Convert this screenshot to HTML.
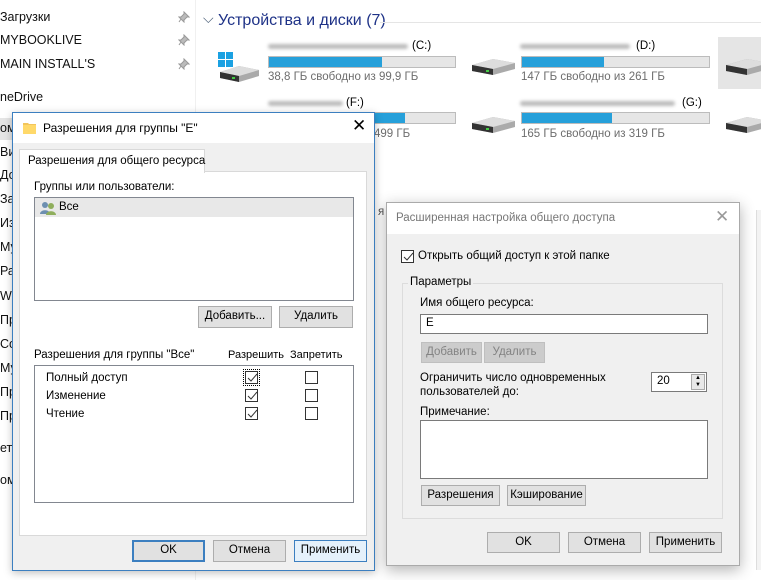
<!DOCTYPE html>
<html><head><meta charset="utf-8"><style>
*{box-sizing:border-box}
body{margin:0;width:761px;height:580px;overflow:hidden;background:#fff;font-family:"Liberation Sans","DejaVu Sans",sans-serif;font-size:11.5px;color:#000;position:relative}
.a{position:absolute;white-space:nowrap}
.btn{position:absolute;background:#e1e1e1;border:1px solid #adadad;text-align:center;line-height:19px;font-size:11.5px}
.cb{position:absolute;width:13px;height:13px;border:1px solid #333;background:#fff}
.cb svg{position:absolute;left:0;top:0}
.bar{position:absolute;height:12px;background:#e6e6e6;border:1px solid #bcbcbc}
.bar i{display:block;height:100%;background:#26a0da}
.blur{position:absolute;height:5px;background:#bbb;border-radius:3px;filter:blur(1.5px)}
.nav{position:absolute;left:0;font-size:12.5px;color:#111}
</style></head><body>
<div class="nav" style="top:10px">Загрузки</div>
<div class="nav" style="top:33px">MYBOOKLIVE</div>
<div class="nav" style="top:57px">MAIN INSTALL'S</div>
<div class="nav" style="top:90px">neDrive</div>
<svg class="a" style="left:178px;top:11px" width="12" height="12"><path d="M6 1l5 5-2 0-3 3 0 2-5-5 2 0 3-3z M3 8l-2 3" stroke="#999" fill="#bbb"/></svg>
<svg class="a" style="left:178px;top:34px" width="12" height="12"><path d="M6 1l5 5-2 0-3 3 0 2-5-5 2 0 3-3z M3 8l-2 3" stroke="#999" fill="#bbb"/></svg>
<svg class="a" style="left:178px;top:58px" width="12" height="12"><path d="M6 1l5 5-2 0-3 3 0 2-5-5 2 0 3-3z M3 8l-2 3" stroke="#999" fill="#bbb"/></svg>
<div class="a" style="left:0;top:118px;width:14px;height:22px;background:#e5e5e5"></div>
<div class="nav" style="top:121px">ом</div><div class="nav" style="top:145px">Ви</div><div class="nav" style="top:168px">До</div><div class="nav" style="top:192px">За</div><div class="nav" style="top:216px">Из</div><div class="nav" style="top:240px">Му</div><div class="nav" style="top:264px">Ра</div><div class="nav" style="top:289px">W</div><div class="nav" style="top:313px">Пр</div><div class="nav" style="top:337px">Со</div><div class="nav" style="top:361px">Му</div><div class="nav" style="top:385px">Пр</div><div class="nav" style="top:409px">Пр</div><div class="nav" style="top:441px">ет</div><div class="nav" style="top:473px">ом</div>
<div class="a" style="left:195px;top:0;width:1px;height:580px;background:#f0f0f0"></div>
<div class="a" style="left:203px;top:10px;color:#4c607a;font-size:14px">⌵</div>
<div class="a" style="left:218px;top:12px;font-size:16px;color:#1e3287">Устройства и диски (7)</div>
<div class="a" style="left:380px;top:22px;width:381px;height:1px;background:#e5e5e5"></div>
<svg class="a" style="left:217px;top:50px" width="45" height="32"><rect x="1" y="2" width="7" height="7" fill="#1ba1e2"/><rect x="9" y="2" width="7" height="7" fill="#1ba1e2"/><rect x="1" y="10" width="7" height="7" fill="#1ba1e2"/><rect x="9" y="10" width="7" height="7" fill="#1ba1e2"/><path d="M3 22 L22 16 L42 20 L42 26 L22 32 L3 28Z" fill="#aaa"/><path d="M3 22 L22 16 L42 20 L22 26Z" fill="#ddd"/><path d="M3 22 L22 26 L22 32 L3 28Z" fill="#333"/><rect x="15" y="27" width="3" height="2" fill="#4c4"/></svg>
<div class="blur" style="left:268px;top:44px;width:140px"></div><div class="a" style="left:412px;top:40px">(C:)</div>
<div class="bar" style="left:268px;top:56px;width:188px"><i style="width:61%"></i></div>
<div class="a" style="left:268px;top:71px;color:#6d6d6d">38,8 ГБ свободно из 99,9 ГБ</div>
<svg class="a" style="left:471px;top:59px" width="45" height="20"><path d="M1 6 L22 0 L44 4 L44 10 L22 16 L1 12Z" fill="#aaa"/><path d="M1 6 L22 0 L44 4 L22 10Z" fill="#ddd"/><path d="M1 6 L22 10 L22 16 L1 12Z" fill="#333"/><rect x="15" y="11" width="3" height="2" fill="#4c4"/></svg>
<div class="blur" style="left:520px;top:44px;width:110px"></div><div class="a" style="left:636px;top:40px">(D:)</div>
<div class="bar" style="left:521px;top:56px;width:189px"><i style="width:44%"></i></div>
<div class="a" style="left:521px;top:71px;color:#6d6d6d">147 ГБ свободно из 261 ГБ</div>
<div class="a" style="left:718px;top:37px;width:43px;height:52px;background:#e5e5e5"></div>
<svg class="a" style="left:725px;top:59px" width="40" height="20"><path d="M1 6 L22 0 L44 4 L44 10 L22 16 L1 12Z" fill="#aaa"/><path d="M1 6 L22 0 L44 4 L22 10Z" fill="#ddd"/><path d="M1 6 L22 10 L22 16 L1 12Z" fill="#333"/></svg>
<div class="blur" style="left:268px;top:101px;width:75px"></div><div class="a" style="left:346px;top:97px">(F:)</div>
<div class="bar" style="left:268px;top:112px;width:188px"><i style="width:73%"></i></div>
<div class="a" style="left:374px;top:128px;color:#6d6d6d">499 ГБ</div>
<svg class="a" style="left:471px;top:117px" width="45" height="20"><path d="M1 6 L22 0 L44 4 L44 10 L22 16 L1 12Z" fill="#aaa"/><path d="M1 6 L22 0 L44 4 L22 10Z" fill="#ddd"/><path d="M1 6 L22 10 L22 16 L1 12Z" fill="#333"/><rect x="15" y="11" width="3" height="2" fill="#4c4"/></svg>
<div class="blur" style="left:520px;top:101px;width:155px"></div><div class="a" style="left:682px;top:97px">(G:)</div>
<div class="bar" style="left:521px;top:112px;width:189px"><i style="width:48%"></i></div>
<div class="a" style="left:521px;top:128px;color:#6d6d6d">165 ГБ свободно из 319 ГБ</div>
<svg class="a" style="left:725px;top:117px" width="40" height="20"><path d="M1 6 L22 0 L44 4 L44 10 L22 16 L1 12Z" fill="#aaa"/><path d="M1 6 L22 0 L44 4 L22 10Z" fill="#ddd"/><path d="M1 6 L22 10 L22 16 L1 12Z" fill="#333"/></svg>
<div class="a" style="left:378px;top:206px;color:#555">я</div>

<div class="a" style="left:12px;top:112px;width:363px;height:459px;background:#f0f0f0;border:1px solid #3c7fc0;box-shadow:0 2px 8px rgba(0,0,0,.25)">
 <div class="a" style="left:0;top:0;width:361px;height:30px;background:#fff"></div>
 <svg class="a" style="left:10px;top:9px" width="14" height="12"><path d="M0 1h5l1 1h7v10H0z" fill="#f2c55c"/><path d="M0 3h13v9H0z" fill="#ffd96a"/></svg>
 <div class="a" style="left:30px;top:8px;font-size:12px">Разрешения для группы "E"</div>
 <div class="a" style="left:339px;top:3px;font-size:17px;font-weight:300">✕</div>
 <div class="a" style="left:6px;top:58px;width:348px;height:365px;background:#fff;border:1px solid #d9d9d9"></div>
 <div class="a" style="left:6px;top:36px;width:186px;height:24px;background:#fff;border:1px solid #d9d9d9;border-bottom:none;padding:5px 0 0 8px">Разрешения для общего ресурса</div>
 <div class="a" style="left:21px;top:68px">Группы или пользователи:</div>
 <div class="a" style="left:21px;top:84px;width:320px;height:104px;background:#fff;border:1px solid #828790"><div style="position:absolute;left:0;top:0;width:318px;height:19px;background:#e8e8e8"></div>
  <svg class="a" style="left:5px;top:3px" width="16" height="14"><circle cx="5" cy="4" r="3" fill="#6d8fb0"/><path d="M0 13c0-5 10-5 10 0z" fill="#6d8fb0"/><circle cx="11" cy="5" r="3" fill="#8fae5c"/><path d="M6 14c0-5 10-5 10 0z" fill="#8fae5c"/></svg>
  <div class="a" style="left:24px;top:3px">Все</div></div>
 <div class="btn" style="left:185px;top:193px;width:74px;height:22px">Добавить...</div>
 <div class="btn" style="left:266px;top:193px;width:74px;height:22px">Удалить</div>
 <div class="a" style="left:21px;top:236px">Разрешения для группы "Все"</div>
 <div class="a" style="left:215px;top:236px;font-size:11px">Разрешить</div>
 <div class="a" style="left:277px;top:236px;font-size:11px">Запретить</div>
 <div class="a" style="left:21px;top:252px;width:320px;height:138px;background:#fff;border:1px solid #828790"></div>
 <div class="a" style="left:33px;top:259px">Полный доступ</div>
 <div class="a" style="left:33px;top:277px">Изменение</div>
 <div class="a" style="left:33px;top:295px">Чтение</div>
 <div class="a" style="left:230px;top:256px;width:17px;height:17px;border:1px dotted #000"></div>
 <div class="cb" style="left:232px;top:258px"><svg width="13" height="13"><path d="M2 6l3 3 6-7" stroke="#333" fill="none"/></svg></div>
 <div class="cb" style="left:232px;top:276px"><svg width="13" height="13"><path d="M2 6l3 3 6-7" stroke="#333" fill="none"/></svg></div>
 <div class="cb" style="left:232px;top:294px"><svg width="13" height="13"><path d="M2 6l3 3 6-7" stroke="#333" fill="none"/></svg></div>
 <div class="cb" style="left:292px;top:258px"></div><div class="cb" style="left:292px;top:276px"></div><div class="cb" style="left:292px;top:294px"></div>
 <div class="btn" style="left:119px;top:427px;width:73px;height:22px;border:2px solid #3c7fc0;line-height:17px">OK</div>
 <div class="btn" style="left:200px;top:427px;width:73px;height:22px">Отмена</div>
 <div class="btn" style="left:281px;top:427px;width:73px;height:22px;background:#e5f1fb;border-color:#3c7fc0">Применить</div>
</div>

<div class="a" style="left:386px;top:202px;width:354px;height:364px;background:#f0f0f0;border:1px solid #aaa;box-shadow:0 4px 14px rgba(0,0,0,.3)">
 <div class="a" style="left:0;top:0;width:352px;height:31px;background:#fff"></div>
 <div class="a" style="left:9px;top:9px;color:#777">Расширенная настройка общего доступа</div>
 <div class="a" style="left:328px;top:4px;font-size:17px;color:#999">✕</div>
 <div class="cb" style="left:14px;top:47px"><svg width="13" height="13"><path d="M2 6l3 3 6-7" stroke="#333" fill="none"/></svg></div>
 <div class="a" style="left:31px;top:47px">Открыть общий доступ к этой папке</div>
 <div class="a" style="left:15px;top:80px;width:321px;height:236px;border:1px solid #dcdcdc"></div>
 <div class="a" style="left:21px;top:73px;background:#f0f0f0;padding:0 2px">Параметры</div>
 <div class="a" style="left:33px;top:94px">Имя общего ресурса:</div>
 <div class="a" style="left:33px;top:111px;width:288px;height:20px;background:#fff;border:1px solid #7a7a7a;padding:2px 5px">E</div>
 <div class="btn" style="left:34px;top:139px;width:61px;height:21px;background:#ccc;border-color:#bfbfbf;color:#838383">Добавить</div>
 <div class="btn" style="left:97px;top:139px;width:61px;height:21px;background:#ccc;border-color:#bfbfbf;color:#838383">Удалить</div>
 <div class="a" style="left:33px;top:168px;line-height:14px">Ограничить число одновременных<br>пользователей до:</div>
 <div class="a" style="left:264px;top:169px;width:56px;height:20px;background:#fff;border:1px solid #7a7a7a;padding:2px 5px">20</div>
 <div class="a" style="left:304px;top:171px;width:14px;height:16px;background:#e8e8e8;border:1px solid #aaa;font-size:6px;line-height:7px;text-align:center">▲<br>▼</div>
 <div class="a" style="left:33px;top:203px">Примечание:</div>
 <div class="a" style="left:33px;top:217px;width:288px;height:59px;background:#fff;border:1px solid #7a7a7a"></div>
 <div class="btn" style="left:34px;top:282px;width:79px;height:21px">Разрешения</div>
 <div class="btn" style="left:120px;top:282px;width:79px;height:21px">Кэширование</div>
 <div class="btn" style="left:100px;top:329px;width:73px;height:21px">OK</div>
 <div class="btn" style="left:181px;top:329px;width:73px;height:21px">Отмена</div>
 <div class="btn" style="left:262px;top:329px;width:73px;height:21px">Применить</div>
</div>
<div class="a" style="left:756px;top:210px;width:5px;height:360px;background:#f3f3f3;border-left:1px solid #ddd"></div>
</body></html>
